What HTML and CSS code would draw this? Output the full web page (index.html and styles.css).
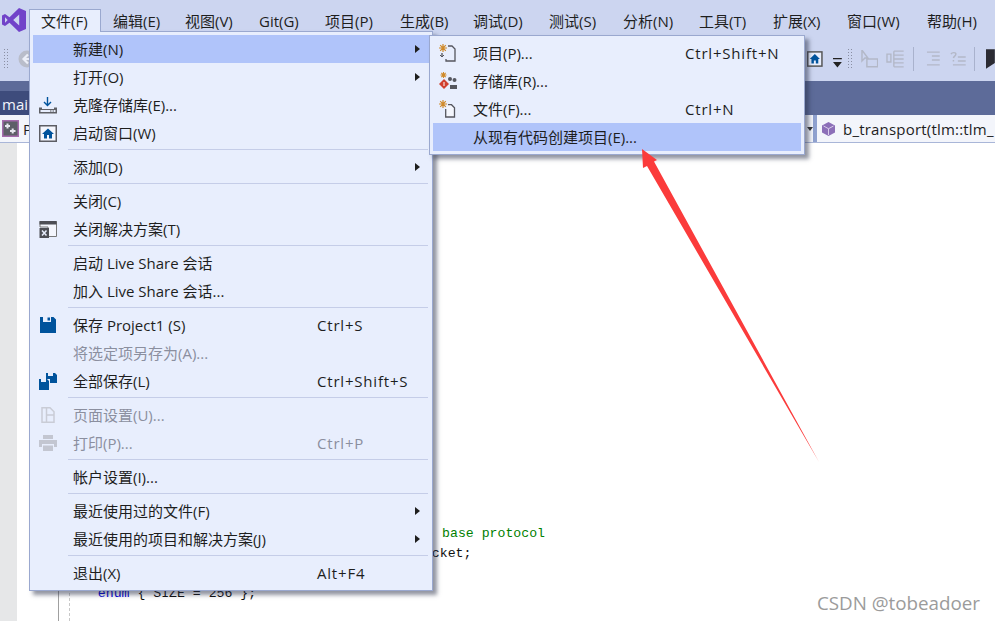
FILE: index.html
```html
<!DOCTYPE html>
<html lang="zh-CN">
<head>
<meta charset="utf-8">
<title>文件菜单</title>
<link rel="stylesheet" href="styles.css">
</head>
<body>
<div class="app">
  <header class="menubar">
    <svg class="logo" width="24" height="24" viewBox="0 0 24 24"><path fill="#7143c9" fill-rule="evenodd" d="M17 0l7 3v18l-7 3-9.500-9.300L3 18l-3-1.600V7.600L3 6l4.500 3.300zM3 9.200v5.600L5.700 12zM17.200 6.500L11.200 12l6 5.500z"/></svg>
    <nav class="menu-items">
      <span class="top-item open">文件(F)</span>
      <span class="top-item">编辑(E)</span>
      <span class="top-item">视图(V)</span>
      <span class="top-item">Git(G)</span>
      <span class="top-item">项目(P)</span>
      <span class="top-item">生成(B)</span>
      <span class="top-item">调试(D)</span>
      <span class="top-item">测试(S)</span>
      <span class="top-item">分析(N)</span>
      <span class="top-item">工具(T)</span>
      <span class="top-item">扩展(X)</span>
      <span class="top-item">窗口(W)</span>
      <span class="top-item">帮助(H)</span>
    </nav>
  </header>

  <div class="toolbar">
    <span class="grip"></span>
    <svg class="tb-back" width="18" height="18" viewBox="0 0 18 18"><circle cx="9" cy="9" r="8.500" fill="#b9bdca"/><path d="M10 4.500L5.500 9l4.500 4.500M6 9h7.500" fill="none" stroke="#eceff8" stroke-width="2.200"/></svg>
    <div class="tb-right">
      <svg width="16" height="16" viewBox="0 0 16 16"><rect x=".75" y=".75" width="14.500" height="14.500" fill="#e8eefd" stroke="#555" stroke-width="1.500"/><path d="M8 3L2.800 8h1.700v4.500h2.500V9.500h2v3h2.500V8h1.700z" fill="#00539c"/></svg>
      <svg class="tb-drop" width="9" height="10" viewBox="0 0 9 10"><path d="M0 0h9v1.300H0zM0 4h9L4.500 9.500z" fill="#222"/></svg>
      <span class="grip"></span>
      <svg class="tb-a" width="18" height="18" viewBox="0 0 18 18"><path d="M1 0v11l3-3h3l-6-8zM6 9h11v8H6z" fill="none" stroke="#b3b8c7" stroke-width="1.500"/></svg>
      <svg class="tb-b" width="19" height="18" viewBox="0 0 19 18"><path d="M1 4h4v8H1zM8 1h10M8 5h10M8 9h10M8 13h10M8 17h10M8 1v16" fill="none" stroke="#b3b8c7" stroke-width="1.400"/></svg>
      <span class="tb-sep"></span>
      <svg class="tb-c" width="15" height="16" viewBox="0 0 15 16"><path d="M1 1h13M6 5h8M6 9h8M1 14h13" fill="none" stroke="#b3b8c7" stroke-width="1.500"/></svg>
      <svg class="tb-d" width="16" height="16" viewBox="0 0 16 16"><path d="M1 3c1-2 5-2 5 0s-2 2-2.500 4M3.500 9v1.500M8 6h8M8 10h8M3 14h13" fill="none" stroke="#b3b8c7" stroke-width="1.500"/></svg>
      <span class="tb-sep"></span>
      <svg class="tb-flag" width="9" height="20" viewBox="0 0 9 20"><path d="M0 0h9v14l-9 6z" fill="#2b2b33"/></svg>
    </div>
  </div>

  <div class="tabband"><span class="tab-name">mai</span></div>

  <div class="navbar">
    <div class="nav-left">
      <svg width="17" height="17" viewBox="0 0 17 17"><rect x=".75" y=".75" width="15.500" height="15.500" fill="#5e5f68" stroke="#a56bad" stroke-width="1.500"/><path d="M3 6h5M5.500 3.500v5M8 11h5.500M10.700 8.500v5" stroke="#e6e6ee" stroke-width="2"/></svg>
      <span>P</span>
    </div>
    <div class="nav-right">
      <svg class="nav-caret" width="6" height="4" viewBox="0 0 6 4"><path d="M0 0h6L3 4z" fill="#333"/></svg>
      <span class="nav-bar"></span>
      <div class="nav-cell">
        <svg width="13" height="14" viewBox="0 0 13 14"><path d="M6.500 0L13 3.500v7L6.500 14 0 10.500v-7z" fill="#8c6fb8"/><path d="M1.500 4l5 2.700 5-2.700M6.500 6.700V13" fill="none" stroke="#d9cdea"/></svg>
        <span>b_transport(tlm::tlm_</span>
      </div>
    </div>
  </div>

  <main class="editor">
    <div class="gutter"></div>
    <div class="margin-line"></div>
    <div class="fold-line"></div>
    <div class="code">
      <div class="line indent-base"><span class="comment">base protocol</span></div>
      <div class="line indent-socket">cket;</div>
      <div class="line"></div>
      <div class="line indent-4"><span class="kw">enum</span> { SIZE = 256 };</div>
    </div>
  </main>

  <section class="menu file-menu">
    <div class="row hot"><span class="slot"></span><span class="label">新建(N)</span><i class="caret"></i></div>
    <div class="row"><span class="slot"></span><span class="label">打开(O)</span><i class="caret"></i></div>
    <div class="row"><span class="slot"><svg width="18" height="17" viewBox="0 0 18 17"><path d="M8.500 0v8M5 5l3.500 3.500L12 5" fill="none" stroke="#00539c" stroke-width="1.400"/><path d="M0 10.500h3v1.500h12v-1.500h3v6H0z" fill="#5f6066"/><path d="M1.500 13h15v2h-15z" fill="#e8eefd"/><path d="M11 13.500h1.500v1H11zM13.500 13.500H15v1h-1.500z" fill="#555"/></svg></span><span class="label">克隆存储库(E)...</span></div>
    <div class="row"><span class="slot"><svg width="18" height="17" viewBox="0 0 18 17"><rect x=".75" y=".75" width="16.500" height="15.500" fill="#f4f6fd" stroke="#5c5d64" stroke-width="1.500"/><path d="M9 3.500L3 9h2v4.500h3V10h2v3.500h3V9h2z" fill="#00539c"/></svg></span><span class="label">启动窗口(W)</span></div>
    <div class="sep"></div>
    <div class="row"><span class="slot"></span><span class="label">添加(D)</span><i class="caret"></i></div>
    <div class="sep"></div>
    <div class="row"><span class="slot"></span><span class="label">关闭(C)</span></div>
    <div class="row"><span class="slot"><svg width="18" height="17" viewBox="0 0 18 17"><path d="M1 .5h16.500v15H9V6H1z" fill="#f4f6fd" stroke="#777"/><path d="M.500 0h17v3.500H.500z" fill="#4d4e55"/><path d="M.500 7H10v10H.500z" fill="#4d4e55"/><path d="M3 9.500l4.500 5M7.500 9.500L3 14.500" stroke="#e8eefd" stroke-width="1.500"/></svg></span><span class="label">关闭解决方案(T)</span></div>
    <div class="sep"></div>
    <div class="row"><span class="slot"></span><span class="label">启动 Live Share 会话</span></div>
    <div class="row"><span class="slot"></span><span class="label">加入 Live Share 会话...</span></div>
    <div class="sep"></div>
    <div class="row"><span class="slot"><svg width="16" height="16" viewBox="0 0 16 16"><path d="M0 0h3v5h8V0h2.500L16 2.500V16H0z" fill="#00539c"/><path d="M7.500 .5H10v3H7.500z" fill="#00539c"/></svg></span><span class="label">保存 Project1 (S)</span><span class="key">Ctrl+S</span></div>
    <div class="row off"><span class="slot"></span><span class="label">将选定项另存为(A)...</span></div>
    <div class="row"><span class="slot"><svg width="18" height="17" viewBox="0 0 18 17"><path d="M7 0h2v3h5V0h2l2 2v8h-7V6H7z" fill="#00539c"/><path d="M0 6h2v3h5V6h1l2 2v9H0z" fill="#00539c"/></svg></span><span class="label">全部保存(L)</span><span class="key">Ctrl+Shift+S</span></div>
    <div class="sep"></div>
    <div class="row off"><span class="slot"><svg width="14" height="16" viewBox="0 0 14 16"><path d="M1 .75h8l4 4v10.500H1zM5.500 .75v14.500M5.500 8H13" fill="none" stroke="#c9ccd6" stroke-width="1.500"/></svg></span><span class="label">页面设置(U)...</span></div>
    <div class="row off"><span class="slot"><svg width="18" height="16" viewBox="0 0 18 16"><path d="M4 0h10v4H4zM0 5h18v7h-3V9H3v3H0zM4 10.500h10V16H4z" fill="#c3c6d1"/></svg></span><span class="label">打印(P)...</span><span class="key">Ctrl+P</span></div>
    <div class="sep"></div>
    <div class="row"><span class="slot"></span><span class="label">帐户设置(I)...</span></div>
    <div class="sep"></div>
    <div class="row"><span class="slot"></span><span class="label">最近使用过的文件(F)</span><i class="caret"></i></div>
    <div class="row"><span class="slot"></span><span class="label">最近使用的项目和解决方案(J)</span><i class="caret"></i></div>
    <div class="sep"></div>
    <div class="row"><span class="slot"></span><span class="label">退出(X)</span><span class="key">Alt+F4</span></div>
  </section>

  <section class="menu new-menu">
    <div class="row"><span class="slot"><svg width="17" height="18" viewBox="0 0 17 18"><path d="M4 0v8M0 4h8M1.200 1.200l5.600 5.600M6.800 1.200L1.200 6.800" stroke="#d08a2a" stroke-width="1.200"/><path d="M9 2h4l3 3v12H7v-2M3 9v4" fill="none" stroke="#55565e" stroke-width="1.300"/><path d="M3 13l-2-2M3 13l2-2" stroke="#55565e" stroke-width="1"/></svg></span><span class="label">项目(P)...</span><span class="key">Ctrl+Shift+N</span></div>
    <div class="row"><span class="slot"><svg width="18" height="18" viewBox="0 0 18 18"><path d="M4.500 0v6M1.500 3h6M2.300 .8l4.400 4.400M6.700 .8L2.300 5.200" stroke="#d08a2a" stroke-width="1.100"/><path d="M5 7l5 5-5 5-5-5z" fill="#d0402f"/><path d="M5 10v4" stroke="#fff"/><circle cx="11" cy="7" r="2" fill="#55565e"/><circle cx="15.500" cy="8" r="2" fill="#55565e"/><path d="M11 13h7v4h-7z" fill="#55565e"/></svg></span><span class="label">存储库(R)...</span></div>
    <div class="row"><span class="slot"><svg width="17" height="18" viewBox="0 0 17 18"><path d="M4 0v8M0 4h8M1.200 1.200l5.600 5.600M6.800 1.200L1.200 6.800" stroke="#d08a2a" stroke-width="1.200"/><path d="M9 4.700h3.500l3 3V17H6.700V9" fill="#f4f6fd" stroke="#55565e" stroke-width="1.300"/></svg></span><span class="label">文件(F)...</span><span class="key">Ctrl+N</span></div>
    <div class="row hot"><span class="slot"></span><span class="label">从现有代码创建项目(E)...</span></div>
  </section>

  <svg class="arrow" width="995" height="621" viewBox="0 0 995 621"><path d="M642 149L657 160 654 161.500 819 462 647 166 643 168z" fill="#fb3b3b"/></svg>

  <span class="watermark">CSDN @tobeadoer</span>
</div>
</body>
</html>
```

FILE: styles.css
```css
* { box-sizing: border-box; }

html, body {
  margin: 0;
  height: 100%;
  overflow: hidden;
}

.app {
  position: relative;
  display: flex;
  flex-direction: column;
  width: 995px;
  height: 621px;
  overflow: hidden;
  font: 15px/20px "Open Sans", "Noto Sans CJK SC", sans-serif;
  color: #1e1e1e;
  background: #fff;
}

/* Menu bar */
.menubar {
  display: flex;
  align-items: flex-start;
  height: 36px;
  background: #ccd5f0;
}

.logo {
  flex: none;
  margin: 8px 3px 0 2px;
}

.menu-items {
  display: flex;
  padding-top: 9px;
}

.top-item {
  height: 23px;
  width: 72px;
  padding: 1px 0 0 11px;
  white-space: nowrap;
  border: 1px solid transparent;
  border-bottom: 0;
}

.top-item:nth-child(3) { width: 74px; }
.top-item:nth-child(4) { width: 66px; }
.top-item:nth-child(5) { width: 75px; }
.top-item:nth-child(6) { width: 73px; }
.top-item:nth-child(7) { width: 76px; }
.top-item:nth-child(8) { width: 74px; }
.top-item:nth-child(9) { width: 76px; }
.top-item:nth-child(10) { width: 74px; }
.top-item:nth-child(11) { width: 74px; }
.top-item:nth-child(12) { width: 80px; }

.top-item.open {
  position: relative;
  z-index: 3;
  background: #e8eefd;
  border-color: #9aa8cf;
}

/* Toolbar */
.toolbar {
  display: flex;
  align-items: center;
  height: 45px;
  padding: 0 0 0 3px;
  background: #ccd5f0;
}

.grip {
  flex: none;
  width: 5px;
  height: 21px;
  background-image: radial-gradient(#8a8fa3 0.8px, transparent 1px);
  background-size: 3px 3px;
}

.tb-back { margin-left: 10px; }

.tb-right {
  display: flex;
  align-items: center;
  margin-left: auto;
  width: 188px;
}

.tb-drop { margin: 9px 5px 0 10px; }
.tb-a { margin-left: 9px; }
.tb-b { margin-left: 8px; }
.tb-c { margin-left: 12px; }
.tb-d { margin-left: 10px; }
.tb-flag { margin-left: 11px; }

.tb-sep {
  flex: none;
  width: 1px;
  height: 24px;
  margin-left: 8px;
  background: #a9b2cd;
}

/* Document tab band */
.tabband {
  display: flex;
  align-items: flex-end;
  height: 34px;
  background: #5d6b99;
}

.tab-name {
  width: 30px;
  height: 24px;
  padding: 3px 0 0 2px;
  color: #f2f4fb;
  background: #3e4c7c;
}

/* Navigation bar */
.navbar {
  display: flex;
  justify-content: space-between;
  height: 28px;
  background: #ccd5f0;
  border-bottom: 1px solid #a9b6d8;
}

.nav-left {
  display: flex;
  align-items: center;
  gap: 4px;
  width: 60px;
  padding-left: 2px;
  background: #f3f5fb;
}

.nav-right {
  display: flex;
  align-items: center;
  width: 190px;
  background: #f3f5fb;
}

.nav-caret { margin-left: 2px; }

.nav-bar {
  width: 4px;
  height: 100%;
  background: #8fa1cf;
}

.nav-cell {
  display: flex;
  align-items: center;
  gap: 8px;
  padding-left: 5px;
  letter-spacing: 0.2px;
  white-space: nowrap;
}

/* Editor */
.editor {
  position: relative;
  flex: 1;
  display: flex;
  background: #fff;
}

.gutter {
  flex: none;
  width: 17px;
  background: #e6e7e8;
}

.margin-line {
  flex: none;
  width: 1px;
  margin-left: 41px;
  background: #a0a0a0;
}

.fold-line {
  flex: none;
  width: 0;
  margin-left: 10px;
  border-left: 1px dashed #c8c8c8;
}

.code {
  flex: none;
  margin: 381px 0 0 -3px;
  font: 13.2px/20px "Liberation Mono", monospace;
  color: #111;
}

.line { min-height: 20px; white-space: pre; }
.indent-base { margin-left: 47.4ch; }
.indent-socket { margin-left: 46.1ch; }
.indent-4 { margin-left: 3.9ch; }

.comment { color: #008000; }
.kw { color: #0000d8; }

/* Menus */
.menu {
  position: absolute;
  z-index: 2;
  padding: 3px;
  background: #e8eefd;
  border: 1px solid #9aa8cf;
  box-shadow: 4px 4px 4px rgba(40, 45, 70, 0.5);
}

.file-menu {
  top: 31px;
  left: 29px;
  width: 404px;
  --label: 244px;
}

.new-menu {
  top: 35px;
  left: 429px;
  z-index: 4;
  width: 376px;
  --label: 212px;
}

.row {
  display: flex;
  align-items: center;
  height: 28px;
  white-space: nowrap;
}

.row.hot { background: #b0c4fa; }
.row.off { color: #8b8f9f; }

.slot {
  flex: none;
  display: flex;
  justify-content: center;
  width: 29px;
  margin-right: 11px;
}

.label {
  flex: none;
  width: var(--label);
}

.key { letter-spacing: 0.8px; }

.caret {
  margin-left: auto;
  margin-right: 9px;
  border-left: 5px solid #1e1e1e;
  border-top: 4px solid transparent;
  border-bottom: 4px solid transparent;
}

.sep {
  height: 1px;
  margin: 2px 1px 3px 35px;
  background: #c5cde8;
}

/* Overlays */
.arrow {
  position: absolute;
  top: 0;
  left: 0;
  z-index: 5;
  pointer-events: none;
}

.watermark {
  position: absolute;
  right: 15px;
  bottom: 8px;
  z-index: 6;
  font-size: 18.800px;
  color: #9b9b9b;
}
```
